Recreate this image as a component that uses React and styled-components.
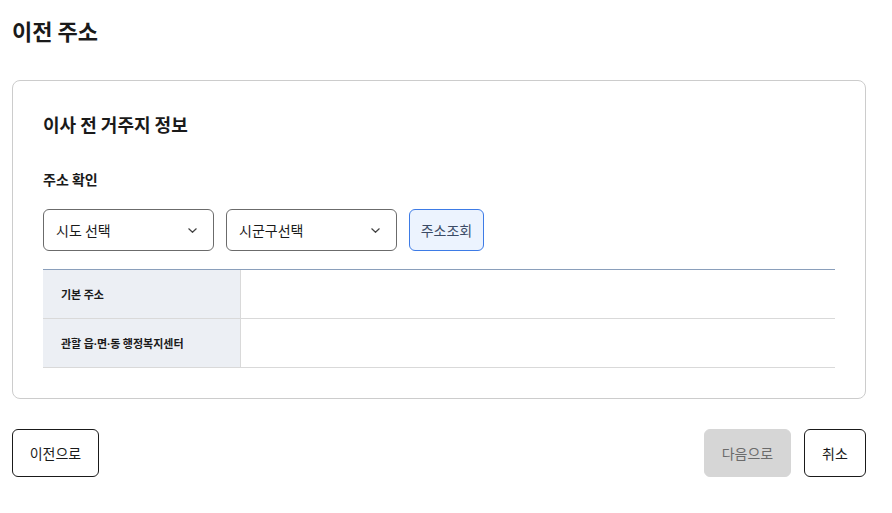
import React from 'react';
import styled, { createGlobalStyle } from 'styled-components';

const GlobalStyle = createGlobalStyle`
  body {
    margin: 0;
    background: #ffffff;
    font-family: "Noto Sans CJK KR", "Noto Sans", sans-serif;
    color: #1a1a1a;
  }
`;

const Page = styled.div`
  padding: 10px 26px 20px 12px;
  width: 892px;
  box-sizing: border-box;
`;

const PageTitle = styled.h1`
  margin: 0;
  font-size: 22px;
  font-weight: 700;
  line-height: 40px;
  color: #1a1a1a;
`;

const Card = styled.section`
  margin-top: 30px;
  border: 1px solid #cccccc;
  border-radius: 8px;
  padding: 29px 30px 30px 30px;
`;

const SectionTitle = styled.h2`
  margin: 0;
  font-size: 18px;
  font-weight: 700;
  line-height: 28px;
`;

const Label = styled.div`
  margin-top: 30px;
  font-size: 14px;
  font-weight: 700;
  line-height: 22px;
`;

const Controls = styled.div`
  display: flex;
  gap: 12px;
  margin-top: 19px;
`;

const Select = styled.div`
  width: 171px;
  height: 42px;
  box-sizing: border-box;
  border: 1px solid #6b6b6b;
  border-radius: 6px;
  display: flex;
  align-items: center;
  justify-content: space-between;
  padding: 0 16px 0 12px;
  font-size: 14px;
  color: #1a1a1a;
`;

const SearchButton = styled.button`
  height: 42px;
  width: 75px;
  box-sizing: border-box;
  border: 1px solid #3d7be6;
  border-radius: 6px;
  background: #ecf3fe;
  color: #3b4b66;
  font-family: inherit;
  font-size: 14px;
  padding: 0;
`;

const Table = styled.div`
  margin-top: 18px;
  border-top: 1px solid #8a9fbb;
`;

const Row = styled.div`
  display: grid;
  grid-template-columns: 198px 1fr;
  height: 49px;
  box-sizing: border-box;
  border-bottom: 1px solid #d9d9d9;
`;

const Th = styled.div`
  background: #eceff4;
  border-right: 1px solid #d9d9d9;
  display: flex;
  align-items: center;
  padding-left: 18px;
  font-size: 11px;
  font-weight: 700;
  color: #1a1a1a;
`;

const Dot = styled.span`
  font-family: "Noto Sans", sans-serif;
`;

const Td = styled.div``;

const Footer = styled.div`
  display: flex;
  margin-top: 30px;
  gap: 13px;
`;

const Button = styled.button`
  height: 48px;
  box-sizing: border-box;
  padding: 0;
  width: ${p => p.$w}px;
  margin-left: ${p => (p.$push ? 'auto' : '0')};
  border-radius: 6px;
  border: 1px solid ${p => (p.$disabled ? '#d6d6d6' : '#1a1a1a')};
  background: ${p => (p.$disabled ? '#d6d6d6' : '#ffffff')};
  color: ${p => (p.$disabled ? '#6b6b6b' : '#1a1a1a')};
  font-family: inherit;
  font-size: 14px;
`;

const Chevron = () => (
  <svg width="9" height="5" viewBox="0 0 9 5" fill="none">
    <path d="M0.8 0.8l3.7 3.5 3.7-3.5" stroke="#444" strokeWidth="1.2" strokeLinecap="round" strokeLinejoin="round" />
  </svg>
);

export default function App() {
  return (
    <Page>
      <GlobalStyle />
      <PageTitle>이전 주소</PageTitle>
      <Card>
        <SectionTitle>이사 전 거주지 정보</SectionTitle>
        <Label>주소 확인</Label>
        <Controls>
          <Select>
            <span>시도 선택</span>
            <Chevron />
          </Select>
          <Select>
            <span>시군구선택</span>
            <Chevron />
          </Select>
          <SearchButton>주소조회</SearchButton>
        </Controls>
        <Table>
          <Row>
            <Th>기본 주소</Th>
            <Td />
          </Row>
          <Row>
            <Th>관할 읍<Dot>·</Dot>면<Dot>·</Dot>동 행정복지센터</Th>
            <Td />
          </Row>
        </Table>
      </Card>
      <Footer>
        <Button $w={87}>이전으로</Button>
        <Button $w={87} $push $disabled>다음으로</Button>
        <Button $w={62}>취소</Button>
      </Footer>
    </Page>
  );
}
